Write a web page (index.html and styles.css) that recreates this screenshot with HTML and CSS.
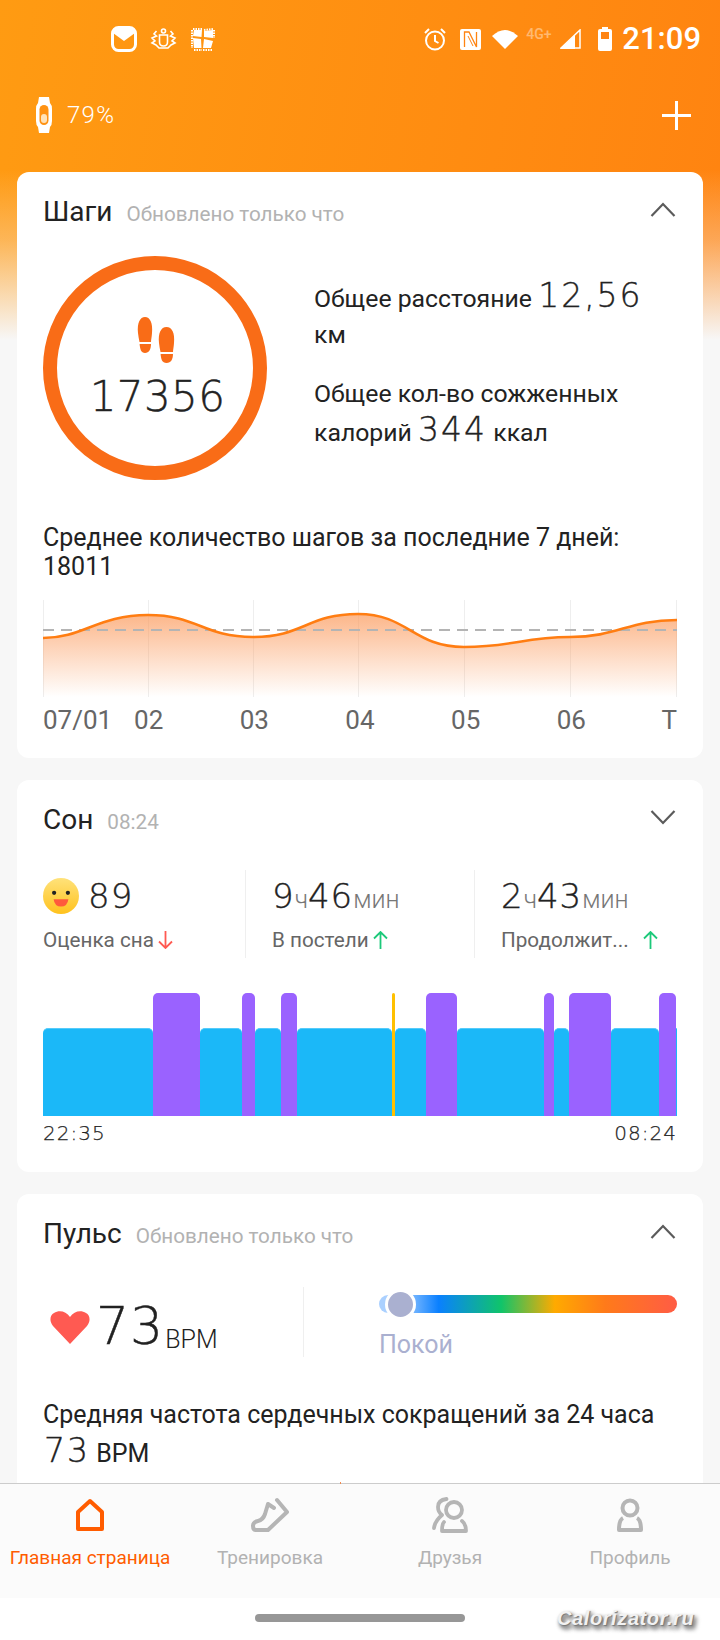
FILE: index.html
```html
<!DOCTYPE html>
<html lang="ru">
<head>
<meta charset="utf-8">
<title>Главная страница</title>
<link rel="stylesheet" href="styles.css">
</head>
<body>
<div class="screen">
  <div class="top">
    <div class="status">
      <div class="status-left">
        <svg class="ic-mail" viewBox="0 0 26 26"><rect x="1.5" y="1.5" width="23" height="23" rx="6" fill="none" stroke="#fff" stroke-width="3"/><path d="M2 3H24V7L13 15L2 7Z" fill="#fff"/></svg>
        <svg class="ic-crest" viewBox="0 0 27 22" fill="none" stroke="#fff" stroke-width="1.6"><circle cx="13.5" cy="3" r="2"/><path d="M9.5 7H17.5V14Q17.5 18 13.5 18Q9.5 18 9.5 14Z"/><path d="M6.5 3L4 6L6.500 8L2 10L5 13L2 15L6 17L9 20H18L21 17L25 15L22 13L25 10L20.500 8L23 6L20.500 3"/></svg>
        <svg class="ic-patch" viewBox="0 0 24 24" fill="#fff"><path d="M3 3H11L10.500 10L2 9ZM13 4L22 3V11L13 10ZM2 11L10 12L10.500 21L3 21ZM13 12L22 14L20 21L12 21Z"/><path d="M2 2H11M13 3L22 2M1 3V21M23 3V11M3 23H11M12 23H21" fill="none" stroke="#fff" stroke-width="2" stroke-dasharray="1.500 1"/></svg>
      </div>
      <div class="status-right">
        <svg class="ic-alarm" viewBox="0 0 24 24" fill="none" stroke="#fff" stroke-width="2"><circle cx="12" cy="13.500" r="9"/><path d="M12 8V14L15.500 16M2 6L6 2M22 6L18 2"/></svg>
        <svg class="ic-nfc" viewBox="0 0 21 21"><rect width="21" height="21" rx="2" fill="#fff"/><path d="M4.500 18V3L9 3L16.500 18V3" fill="none" stroke="#ff8412" stroke-width="1.300"/><path d="M8 7L13 17" stroke="#ff8412" stroke-width="1"/></svg>
        <svg class="ic-wifi" viewBox="0 0 26 20"><path d="M0 7Q13-5 26 7L13 20Z" fill="#fff"/></svg>
        <span class="net">4G+</span>
        <svg class="ic-signal" viewBox="0 0 21 20"><path d="M20 1V19H1Z" fill="none" stroke="#fff" stroke-width="1.500"/><path d="M15 6V20H0Z" fill="#fff"/></svg>
        <svg class="ic-battery" viewBox="0 0 14 24"><path d="M4 0H10V2H12Q14 2 14 4V22Q14 24 12 24H2Q0 24 0 22V4Q0 2 2 2H4Z" fill="#fff"/><rect x="3" y="5" width="8" height="7" fill="#ff8412"/></svg>
        <span class="clock">21:09</span>
      </div>
    </div>
    <div class="device">
      <svg class="ic-band" viewBox="0 0 16 36"><path d="M3 0H13L14 6Q16 8 16 12V24Q16 28 14 30L13 36H3L2 30Q0 28 0 24V12Q0 8 2 6Z" fill="#fff"/><rect x="3.500" y="8" width="9" height="20" rx="4.500" fill="#ff9212"/><rect x="5" y="17" width="6" height="9" rx="3" fill="#ffe2b8"/></svg>
      <span class="battery-pct">79%</span>
      <svg class="ic-plus" viewBox="0 0 29 29"><path d="M14.500 0V29M0 14.500H29" stroke="#fff" stroke-width="3"/></svg>
    </div>
  </div>

  <main class="cards">
    <section class="card card-steps">
      <header class="card-head">
        <h2 class="card-title">Шаги</h2>
        <span class="card-note">Обновлено только что</span>
        <svg class="chevron" viewBox="0 0 26 15"><path d="M1.500 14L13 2L24.500 14" fill="none" stroke="#5b5b5b" stroke-width="2.200"/></svg>
      </header>
      <div class="steps-hero">
        <div class="ring">
          <svg class="ic-feet" viewBox="0 0 38 46" fill="#f96c17">
            <path d="M1 16C0 6 3 0 8 0S16 6 15 16C14.800 20 14 23 14 25H2.500C2 22 1.200 19 1 16Z"/>
            <path d="M2.600 27H14C14 32 12 36 8 36S3 32 2.600 27Z"/>
            <path d="M22 26C21 16 24 10 29.500 10S38 16 37 26C36.800 30 36 33 36 35H23.500C23 32 22.200 29 22 26Z"/>
            <path d="M23.600 37H36C36 42 34 46 29.500 46S24 42 23.600 37Z"/>
          </svg>
          <div class="ring-num">17356</div>
        </div>
        <div class="steps-info">
          <p class="info-line">Общее расстояние <span class="num-md">12,56</span> км</p>
          <p class="info-line">Общее кол-во сожженных калорий <span class="num-md">344</span> ккал</p>
        </div>
      </div>
      <p class="avg-text">Среднее количество шагов за последние 7 дней: 18011</p>
      <svg class="steps-chart" viewBox="0 0 634 100">
        <defs><linearGradient id="area" x1="0" y1="0" x2="0" y2="1"><stop offset="0" stop-color="#fb9a5c" stop-opacity=".72"/><stop offset="1" stop-color="#fb9a5c" stop-opacity="0"/></linearGradient></defs>
        <path d="M.5 0V97M105.500 0V97M210.500 0V97M315.500 0V97M421.500 0V97M527.500 0V97M633.500 0V97" stroke="#eeeeee" stroke-width="1"/>
        <path d="M0 38C40 38 55 15 105 15C155 15 160 37 210 37C260 37 265 14 315 14C365 14 370 47 421 47C470 47 480 37 527 37C575 37 585 20 634 20V97H0Z" fill="url(#area)"/>
        <path d="M0 30H634" stroke="#b4b4b4" stroke-width="1.800" stroke-dasharray="11 7"/>
        <path d="M0 38C40 38 55 15 105 15C155 15 160 37 210 37C260 37 265 14 315 14C365 14 370 47 421 47C470 47 480 37 527 37C575 37 585 20 634 20" fill="none" stroke="#ff7d12" stroke-width="2.600"/>
      </svg>
      <div class="ticks">
        <span class="tick tick-first">07/01</span>
        <span class="tick">02</span>
        <span class="tick">03</span>
        <span class="tick">04</span>
        <span class="tick">05</span>
        <span class="tick">06</span>
        <span class="tick tick-last">T</span>
      </div>
    </section>

    <section class="card card-sleep">
      <header class="card-head">
        <h2 class="card-title">Сон</h2>
        <span class="card-note">08:24</span>
        <svg class="chevron" viewBox="0 0 26 15"><path d="M1.500 1L13 13L24.500 1" fill="none" stroke="#5b5b5b" stroke-width="2.200"/></svg>
      </header>
      <div class="sleep-stats">
        <div class="stat stat-first">
          <div class="stat-value">
            <svg class="emoji" viewBox="0 0 34 34"><defs><linearGradient id="face" x1="0" y1="0" x2="0" y2="1"><stop offset="0" stop-color="#ffe27a"/><stop offset="1" stop-color="#ffc21e"/></linearGradient></defs><circle cx="17" cy="17" r="17" fill="url(#face)"/><circle cx="10.500" cy="14" r="2" fill="#222"/><circle cx="23.500" cy="14" r="2" fill="#222"/><path d="M10 20H24Q23 27 17 27T10 20Z" fill="#ff5a3c"/></svg>
            <span class="num-stat">89</span>
          </div>
          <div class="stat-label">Оценка сна<svg class="arrow" viewBox="0 0 15 18"><path d="M7.500 0V17M1 10.500L7.500 17L14 10.500" fill="none" stroke="#ff5a52" stroke-width="1.800"/></svg></div>
        </div>
        <div class="stat">
          <div class="stat-value"><span class="num-stat">9</span><span class="unit">ч</span><span class="num-stat">46</span><span class="unit">мин</span></div>
          <div class="stat-label">В постели<svg class="arrow" viewBox="0 0 15 18"><path d="M7.500 18V1M1 7.500L7.500 1L14 7.500" fill="none" stroke="#1cc97a" stroke-width="1.800"/></svg></div>
        </div>
        <div class="stat">
          <div class="stat-value"><span class="num-stat">2</span><span class="unit">ч</span><span class="num-stat">43</span><span class="unit">мин</span></div>
          <div class="stat-label">Продолжит...<svg class="arrow arrow-far" viewBox="0 0 15 18"><path d="M7.500 18V1M1 7.500L7.500 1L14 7.500" fill="none" stroke="#1cc97a" stroke-width="1.800"/></svg></div>
        </div>
      </div>
      <div class="sleep-bars">
        <i class="seg light" style="flex-grow:239"></i><i class="seg deep" style="flex-grow:102"></i><i class="seg light" style="flex-grow:91"></i><i class="seg deep" style="flex-grow:28"></i><i class="seg light" style="flex-grow:56"></i><i class="seg deep" style="flex-grow:36"></i><i class="seg light" style="flex-grow:205"></i><i class="seg awake" style="flex-grow:8"></i><i class="seg light" style="flex-grow:66"></i><i class="seg deep" style="flex-grow:68"></i><i class="seg light" style="flex-grow:189"></i><i class="seg deep" style="flex-grow:21"></i><i class="seg light" style="flex-grow:33"></i><i class="seg deep" style="flex-grow:91"></i><i class="seg light" style="flex-grow:105"></i><i class="seg deep" style="flex-grow:37"></i><i class="seg light" style="flex-grow:2"></i>
      </div>
      <div class="sleep-times"><span>22:35</span><span>08:24</span></div>
    </section>

    <section class="card card-pulse">
      <header class="card-head">
        <h2 class="card-title">Пульс</h2>
        <span class="card-note">Обновлено только что</span>
        <svg class="chevron" viewBox="0 0 26 15"><path d="M1.500 14L13 2L24.500 14" fill="none" stroke="#5b5b5b" stroke-width="2.200"/></svg>
      </header>
      <div class="pulse-row">
        <div class="pulse-value">
          <svg class="heart" viewBox="0 0 40 33"><path d="M20 33L3 15C-1 10 0 4 4 2C9-1 16 0 20 6C24 0 31-1 36 2C40 4 41 10 37 15Z" fill="#ff5a52"/></svg>
          <span class="num-lg">73</span><span class="bpm">BPM</span>
        </div>
        <div class="pulse-zone">
          <div class="zone-bar"><span class="zone-knob"></span></div>
          <div class="zone-label">Покой</div>
        </div>
      </div>
      <p class="avg-text avg-pulse">Средняя частота сердечных сокращений за 24 часа</p>
      <p class="avg-pulse-val"><span class="num-md">73</span> BPM</p>
    </section>
  </main>

  <nav class="tabbar">
    <div class="tab tab-active">
      <svg class="tab-icon" viewBox="0 0 38 36" fill="none" stroke="#ff5c00" stroke-width="4" stroke-linejoin="round"><path d="M19 4L31 15V32H7V15Z"/></svg>
      <span>Главная страница</span>
    </div>
    <div class="tab">
      <svg class="tab-icon" viewBox="0 0 38 36" fill="none" stroke="#b5b5b5" stroke-width="4" stroke-linejoin="round" stroke-linecap="round"><path d="M26 3L36 15L17 33H5Q2 33 2 29Q2 25 7 24Q12 23 14 17L17 7L23 11"/></svg>
      <span>Тренировка</span>
    </div>
    <div class="tab">
      <svg class="tab-icon" viewBox="0 0 38 36" fill="none" stroke="#b5b5b5" stroke-width="3.800" stroke-linecap="round" stroke-linejoin="round"><circle cx="23" cy="13" r="8"/><path d="M15.500 2Q7 3 7 10Q7 15 11 18Q4 24 3 31M13 25Q11 27 11 34H35Q35 27 31 24"/></svg>
      <span>Друзья</span>
    </div>
    <div class="tab">
      <svg class="tab-icon" viewBox="0 0 38 36" fill="none" stroke="#b5b5b5" stroke-width="4" stroke-linejoin="round"><circle cx="19" cy="11" r="7.500"/><path d="M12 21Q8 23 8 33H30Q30 23 26 21"/></svg>
      <span>Профиль</span>
    </div>
  </nav>
  <div class="gesture">
    <span class="gesture-bar"></span>
    <span class="watermark">Calorizator.ru</span>
  </div>
</div>
</body>
</html>
```
FILE: styles.css
```css
* { box-sizing: border-box; }
html, body { margin: 0; padding: 0; }
body {
  width: 720px;
  height: 1640px;
  overflow: hidden;
  font-family: Roboto, "Liberation Sans", sans-serif;
  color: #222;
}
h2, p { margin: 0; font-weight: 400; }
svg { display: block; flex: none; }

.screen {
  width: 720px;
  height: 1640px;
  display: flex;
  flex-direction: column;
  background:
    linear-gradient(to bottom, rgba(247,247,247,0) 170px, rgba(247,247,247,.3) 240px, rgba(247,247,247,1) 340px),
    linear-gradient(100deg, #ff9b12 0%, #ff7c10 100%);
  background-color: #f7f7f7;
}

/* top */
.top { height: 172px; flex: none; color: #fff; }
.status { height: 78px; display: flex; align-items: flex-start; padding: 26px 19px 0 111px; justify-content: space-between; }
.status-left, .status-right { display: flex; align-items: center; }
.status-left { height: 26px; }
.ic-mail { width: 26px; height: 26px; }
.ic-crest { width: 27px; height: 22px; margin-left: 13px; }
.ic-patch { width: 24px; height: 24px; margin-left: 14px; }
.status-right { height: 26px; }
.ic-alarm { width: 24px; height: 24px; }
.ic-nfc { width: 21px; height: 21px; margin-left: 13px; }
.ic-wifi { width: 26px; height: 20px; margin-left: 11px; }
.net { width: 30px; margin-left: 8px; font-size: 14px; font-weight: 500; opacity: .4; align-self: flex-start; line-height: 16px; }
.ic-signal { width: 21px; height: 20px; margin-left: 4px; }
.ic-battery { width: 14px; height: 24px; margin-left: 17px; }
.clock { margin-left: 10px; font-size: 31px; font-weight: 500; line-height: 26px; }

.device { height: 36px; margin-top: 19px; display: flex; align-items: center; padding: 0 29px 0 36px; }
.ic-band { width: 16px; height: 36px; }
.battery-pct { margin-left: 15px; font-size: 24px; font-weight: 300; letter-spacing: 1.300px; }
.ic-plus { width: 29px; height: 29px; margin-left: auto; }

/* cards */
.cards { flex: 1; min-height: 0; overflow: hidden; padding: 0 17px; display: flex; flex-direction: column; gap: 22px; }
.card { flex: none; background: #fff; border-radius: 12px; padding: 0 26px; }
.card-steps { height: 586px; }
.card-sleep { height: 392px; }
.card-pulse { height: 400px; }

.card-head { height: 84px; display: flex; align-items: center; padding-bottom: 4px; }
.card-title { font-size: 28px; line-height: 32px; color: #222; }
.card-note { margin-left: 14px; margin-top: 3px; font-size: 20.7px; color: #b2b2b2; }
.chevron { width: 26px; height: 15px; margin-left: auto; margin-right: 1px; margin-top: -6px; }

/* steps */
.steps-hero { display: flex; align-items: flex-start; gap: 47px; height: 223px; }
.ring { width: 224px; height: 224px; flex: none; border: 14px solid #f96c17; border-radius: 50%; display: flex; flex-direction: column; align-items: center; padding-top: 47px; }
.ic-feet { width: 38px; height: 46px; margin-left: 2px; }
.ring-num { margin-top: 9px; margin-left: 5px; font-family: "DejaVu Sans", sans-serif; font-size: 42px; font-weight: 200; -webkit-text-stroke: .4px #222; line-height: 50px; letter-spacing: .4px; color: #222; }
.steps-info { flex: 1; padding: 22px 24px 0 0; }
.info-line { font-size: 24.800px; line-height: 35.500px; color: #222; }
.info-line + .info-line { margin-top: 24px; }
.num-md { font-family: "DejaVu Sans", sans-serif; font-size: 33px; font-weight: 200; -webkit-text-stroke: .35px #222; letter-spacing: 2px; }

.avg-text { font-size: 25px; line-height: 29px; color: #222; }
.card-steps .avg-text { margin-top: 44px; }
.steps-chart { width: 634px; height: 100px; margin-top: 19px; }
.ticks { display: flex; justify-content: space-between; width: 634px; margin-top: 2px; }
.tick { width: 0; display: flex; justify-content: center; white-space: nowrap; font-size: 26px; line-height: 36px; color: #666; }
.tick-first { justify-content: flex-start; }
.tick-last { justify-content: flex-end; }

/* sleep */
.sleep-stats { display: flex; height: 88px; margin-top: 6px; }
.stat { flex: none; padding-left: 26px; border-left: 1px solid #efefef; width: 229px; }
.stat-first { padding-left: 0; border-left: 0; width: 202px; }
.stat-value { height: 52px; display: flex; align-items: baseline; }
.stat-first .stat-value { align-items: center; }
.emoji { width: 36px; height: 36px; margin-right: 9px; }
.num-stat { font-family: "DejaVu Sans", sans-serif; font-size: 34px; font-weight: 200; -webkit-text-stroke: .35px #222; letter-spacing: 1px; line-height: 52px; }
.unit { font-size: 25px; font-weight: 300; color: #777; }
.stat-label { display: flex; align-items: center; font-size: 20.7px; line-height: 28px; color: #666; margin-top: 4px; }
.arrow { width: 15px; height: 18px; margin-left: 4px; }
.arrow-far { margin-left: 14px; }

.sleep-bars { display: flex; align-items: flex-end; height: 123px; margin-top: 35px; width: 634px; }
.seg { display: block; flex-basis: 0; border-radius: 5px 5px 0 0; }
.light { height: 88px; background: #1bb8f8; border-top: 1px solid #55cbfa; }
.deep { height: 123px; background: #9a62ff; }
.awake { height: 123px; background: #ffc000; }
.sleep-times { display: flex; justify-content: space-between; width: 634px; font-family: "DejaVu Sans", sans-serif; font-size: 20px; line-height: 34px; font-weight: 200; -webkit-text-stroke: .25px #222; letter-spacing: 1px; color: #222; }

/* pulse */
.pulse-row { display: flex; height: 70px; margin-top: 9px; }
.pulse-value { flex: none; width: 261px; padding-left: 7px; display: flex; align-items: center; border-right: 1px solid #efefef; }
.heart { width: 40px; height: 33px; margin-top: 10px; }
.num-lg { margin-left: 6px; font-family: "DejaVu Sans", sans-serif; font-size: 52px; font-weight: 200; -webkit-text-stroke: .45px #222; letter-spacing: 1px; line-height: 70px; margin-top: 8px; }
.bpm { font-size: 25px; font-weight: 300; align-self: flex-end; line-height: 28px; margin-bottom: 3px; margin-left: 1px; }
.pulse-zone { flex: 1; padding-left: 75px; padding-top: 8px; }
.zone-bar { position: relative; height: 18px; border-radius: 9px; background: linear-gradient(90deg, #aad0ff 0%, #aad0ff 7%, #0a80ff 20%, #10c46a 41%, #ffaa00 59%, #ff7a1a 76%, #ff5c45 100%); }
.zone-knob { position: absolute; left: 6px; top: -6px; width: 31px; height: 31px; border-radius: 50%; background: #aab0d0; border: 3px solid #fff; }
.zone-label { margin-top: 15px; font-size: 25px; line-height: 34px; color: #aab0d0; }

.avg-pulse { margin-top: 43px; }
.avg-pulse-val { font-size: 25px; line-height: 44px; padding-left: 1px; }

/* tab bar */
.tabbar { position: relative; flex: none; height: 115px; background: #fbfbfb; border-top: 1px solid #cccccc; display: grid; grid-template-columns: repeat(4, 180px); }
.tabbar::before { content: ""; position: absolute; left: 340px; top: -2px; width: 1px; height: 2px; background: #f08a50; }
.tab { display: flex; flex-direction: column; align-items: center; padding-top: 13px; font-size: 19px; color: #b2b2b2; }
.tab-active { color: #ff5c00; }
.tab-icon { width: 38px; height: 36px; }
.tab span { margin-top: 12px; line-height: 26px; white-space: nowrap; }

/* gesture */
.gesture { position: relative; flex: none; height: 42px; background: #fff; display: flex; justify-content: center; padding-top: 16px; }
.gesture-bar { width: 210px; height: 8px; border-radius: 4px; background: #979797; }
.watermark { position: absolute; left: 557px; top: 9px; font-family: "Liberation Sans", sans-serif; font-style: italic; font-weight: 700; font-size: 20px; letter-spacing: .6px; color: #f2f2f2; text-shadow: 1px 1px 1px #777, 2px 3px 4px #666, 3px 4px 5px #888; white-space: nowrap; }
```
